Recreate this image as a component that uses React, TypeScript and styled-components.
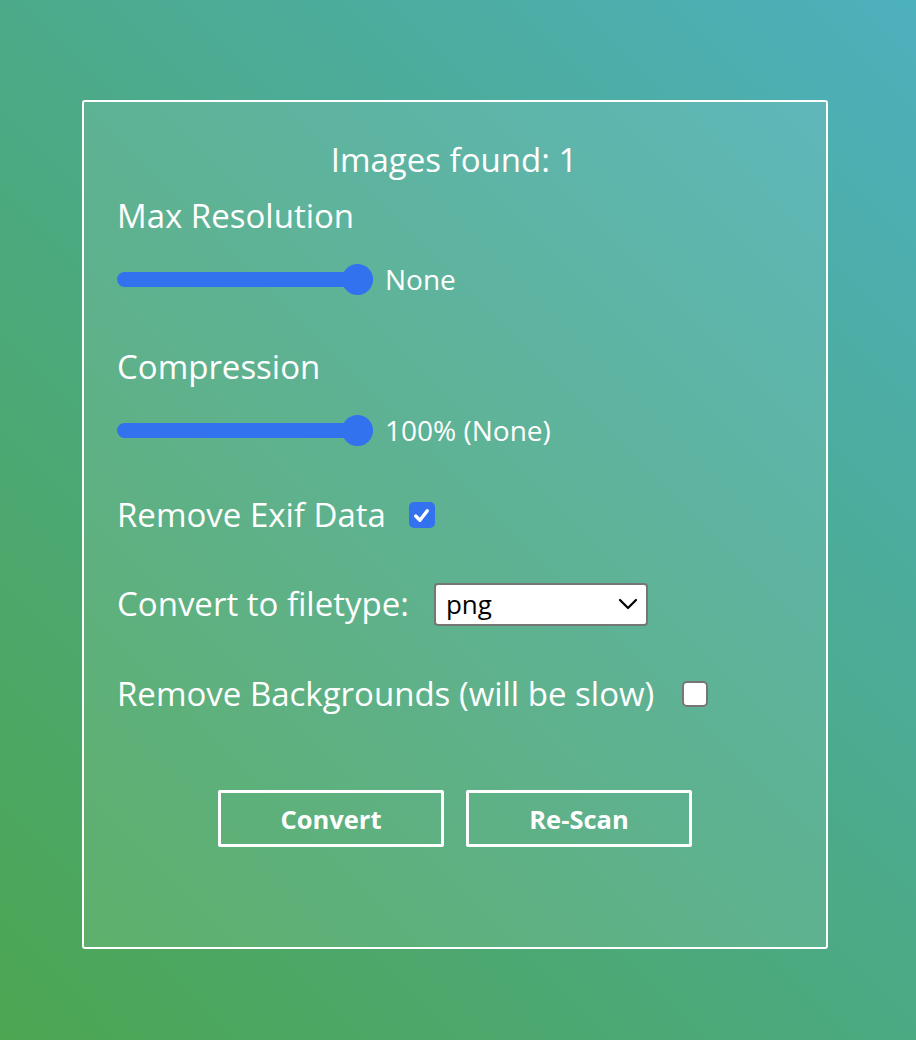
import React, { useState } from "react";
import styled, { createGlobalStyle } from "styled-components";

const Global = createGlobalStyle`
  html, body { margin: 0; padding: 0; }
  body {
    min-height: 1040px;
    background: linear-gradient(45deg, #4ca652 0%, #4caa86 50%, #4db0bd 100%);
    font-family: "Open Sans", "Noto Sans", sans-serif;
    color: #ffffff;
  }
`;

const Page = styled.div`
  height: 1040px;
  box-sizing: border-box;
  padding: 100px 0 0 82px;
  display: flex;
`;

const Panel = styled.div`
  width: 746px;
  height: 849px;
  box-sizing: border-box;
  border: 2px solid #ffffff;
  border-radius: 3px;
  background: rgba(255, 255, 255, 0.1);
  padding: 36px 33px 0 33px;
  display: flex;
  flex-direction: column;
`;

const Title = styled.div`
  text-align: center;
  font-size: 33px;
  line-height: 44px;
  margin-left: -2px;
`;

const Label = styled.div<{ $mt?: number }>`
  font-size: 33px;
  line-height: 44px;
  white-space: nowrap;
  margin-top: ${(p) => p.$mt ?? 0}px;
`;

const SliderRow = styled.div<{ $mt?: number }>`
  display: flex;
  align-items: center;
  gap: 12px;
  margin-top: ${(p) => p.$mt ?? 0}px;
  height: 34px;
`;

const SliderTrack = styled.div`
  position: relative;
  width: 256px;
  height: 15px;
  border-radius: 8px;
  background: #3272ee;
`;

const Thumb = styled.div`
  position: absolute;
  right: 0;
  top: 50%;
  width: 31px;
  height: 31px;
  margin-top: -15.5px;
  border-radius: 50%;
  background: #3272ee;
`;

const SliderValue = styled.span`
  font-size: 28px;
  line-height: 34px;
`;

const InlineRow = styled.div<{ $mt?: number; $gap?: number }>`
  display: flex;
  align-items: center;
  gap: ${(p) => p.$gap ?? 22}px;
  margin-top: ${(p) => p.$mt ?? 0}px;
  height: 44px;
`;

const Box = styled.span<{ $checked?: boolean }>`
  width: 26px;
  height: 26px;
  box-sizing: border-box;
  border-radius: 5px;
  display: inline-flex;
  align-items: center;
  justify-content: center;
  background: ${(p) => (p.$checked ? "#3272ee" : "#ffffff")};
  border: ${(p) => (p.$checked ? "none" : "2px solid #767676")};
`;

const Select = styled.div`
  width: 214px;
  height: 43px;
  box-sizing: border-box;
  background: #ffffff;
  border: 2px solid #767676;
  border-radius: 4px;
  display: flex;
  align-items: center;
  justify-content: space-between;
  padding: 0 8px 0 10px;
  color: #000000;
  font-family: "Open Sans", "Noto Sans", sans-serif;
  font-size: 26px;
`;

const Buttons = styled.div`
  display: flex;
  justify-content: center;
  gap: 22px;
  margin-top: 74px;
`;

const Button = styled.button`
  width: 226px;
  height: 57px;
  box-sizing: border-box;
  border: 3px solid #ffffff;
  border-radius: 2px;
  background: transparent;
  color: #ffffff;
  font-family: "Open Sans", "Noto Sans", sans-serif;
  font-weight: 700;
  font-size: 25.5px;
  cursor: pointer;
`;

const Check = () => (
  <svg width="19" height="19" viewBox="0 0 18 18">
    <path d="M3.5 9.5 L7.5 13.5 L14.5 4.5" fill="none" stroke="#ffffff" strokeWidth="3.2" strokeLinecap="round" strokeLinejoin="round" />
  </svg>
);

const Chevron = () => (
  <svg width="20" height="12" viewBox="0 0 20 12">
    <path d="M2 2 L10 10 L18 2" fill="none" stroke="#000" strokeWidth="2.2" strokeLinecap="round" strokeLinejoin="round" />
  </svg>
);

export default function App() {
  const [exif, setExif] = useState(true);
  const [bg, setBg] = useState(false);
  return (
    <>
      <Global />
      <Page>
        <Panel>
          <Title>Images found: 1</Title>
          <Label $mt={12}>Max Resolution</Label>
          <SliderRow $mt={24}>
            <SliderTrack>
              <Thumb />
            </SliderTrack>
            <SliderValue>None</SliderValue>
          </SliderRow>
          <Label $mt={49}>Compression</Label>
          <SliderRow $mt={24}>
            <SliderTrack>
              <Thumb />
            </SliderTrack>
            <SliderValue>100% (None)</SliderValue>
          </SliderRow>
          <InlineRow $mt={46} $gap={23}>
            <Label>Remove Exif Data</Label>
            <Box $checked={exif} onClick={() => setExif(!exif)}>
              {exif && <Check />}
            </Box>
          </InlineRow>
          <InlineRow $mt={45} $gap={25}>
            <Label>Convert to filetype:</Label>
            <Select>
              <span>png</span>
              <Chevron />
            </Select>
          </InlineRow>
          <InlineRow $mt={46} $gap={28}>
            <Label>Remove Backgrounds (will be slow)</Label>
            <Box $checked={bg} onClick={() => setBg(!bg)}>
              {bg && <Check />}
            </Box>
          </InlineRow>
          <Buttons>
            <Button>Convert</Button>
            <Button>Re-Scan</Button>
          </Buttons>
        </Panel>
      </Page>
    </>
  );
}
